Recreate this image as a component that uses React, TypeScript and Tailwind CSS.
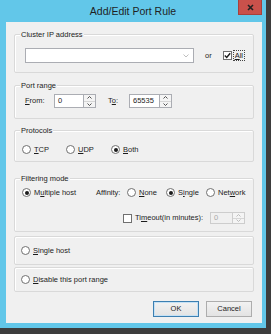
import React from "react";

function Acc({ pre = "", u, post = "" }: { pre?: string; u: string; post?: string }) {
  return (
    <span className="whitespace-nowrap">
      {pre}
      <span className="underline underline-offset-[1px] decoration-[0.5px]">{u}</span>
      {post}
    </span>
  );
}

function Radio({ checked = false }: { checked?: boolean }) {
  return (
    <span className="w-[9px] h-[9px] shrink-0 rounded-full border border-[#707070] bg-white flex items-center justify-center">
      {checked && <span className="w-[4px] h-[4px] rounded-full bg-[#1c1c1c]" />}
    </span>
  );
}

function Check({ checked = false }: { checked?: boolean }) {
  return (
    <span className="w-[9px] h-[9px] shrink-0 border border-[#707070] bg-white flex items-center justify-center">
      {checked && (
        <svg width="7" height="7" viewBox="0 0 7 7">
          <path d="M0.8 3.6 L2.7 5.5 L6.2 1.2" fill="none" stroke="#1c1c1c" strokeWidth="1.4" />
        </svg>
      )}
    </span>
  );
}

function Spin({ value, width, height, disabled = false }: { value: string; width: string; height: string; disabled?: boolean }) {
  const arrow = disabled ? "#b5b5b5" : "#404040";
  return (
    <div className={`flex ${height}`}>
      <div
        className={`${width} h-full border flex items-center pl-[3px] ${
          disabled ? "border-[#cdcdcd] bg-[#f0f0f0] text-[#a8a8a8]" : "border-[#abadb3] bg-white text-[#1c1c1c]"
        }`}
      >
        {value}
      </div>
      <div className={`w-[12px] h-full border border-l-0 flex flex-col ${disabled ? "border-[#cdcdcd]" : "border-[#abadb3]"}`}>
        <div className="flex-1 flex items-center justify-center border-b border-[#d6d6d6] bg-[#f4f4f4]">
          <svg width="5" height="3" viewBox="0 0 5 3">
            <path d="M0.5 2.5 L2.5 0.5 L4.5 2.5" fill="none" stroke={arrow} strokeWidth="0.9" />
          </svg>
        </div>
        <div className="flex-1 flex items-center justify-center bg-[#f4f4f4]">
          <svg width="5" height="3" viewBox="0 0 5 3">
            <path d="M0.5 0.5 L2.5 2.5 L4.5 0.5" fill="none" stroke={arrow} strokeWidth="0.9" />
          </svg>
        </div>
      </div>
    </div>
  );
}

// group box: border line at the top, caption sits over it
function Group({ label, className = "", children }: { label?: string; className?: string; children: React.ReactNode }) {
  return (
    <div className={`border border-[#d9d9d9] rounded-[2px] shadow-[inset_1px_1px_0_#ffffff] flex flex-col ${className}`}>
      {label && <div className="-mt-[5px] ml-[5px] px-[1px] self-start bg-[#f0f0f0] leading-[10px]">{label}</div>}
      {children}
    </div>
  );
}

export default function App() {
  return (
    <div className="w-[271px] h-[334px] bg-[#3d3d3d] font-['Liberation_Sans',Arial,sans-serif] text-[7.5px] text-[#1c1c1c]">
      <div className="w-[266px] h-[328px] bg-[#62c7e9] flex flex-col">
        {/* title bar */}
        <div className="h-[22px] relative flex items-center justify-center">
          <span className="text-[10.5px] text-[#1f1f1f] mt-[2px]">Add/Edit Port Rule</span>
          <div className="absolute right-[4px] top-0 w-[24px] h-[15px] bg-[#c9514b] border border-t-0 border-[#a8413c] flex items-center justify-center">
            <svg width="7" height="7" viewBox="0 0 7 7">
              <path d="M1 1 L6 6 M6 1 L1 6" stroke="#222" strokeWidth="1.6" />
            </svg>
          </div>
        </div>

        {/* client area */}
        <div className="flex-1 ml-[6px] mr-[4px] mb-[5px] bg-[#f0f0f0] px-[8px] flex flex-col">
          <Group label="Cluster IP address" className="mt-[12px]">
            <div className="flex items-center mt-[8px] mb-[9px] pl-[10px]">
              <div className="w-[169px] h-[15px] border border-[#abadb3] bg-white flex items-center justify-end pr-[4px]">
                <svg width="6" height="4" viewBox="0 0 6 4">
                  <path d="M0.5 0.5 L3 3 L5.5 0.5" fill="none" stroke="#b8b8b8" strokeWidth="0.9" />
                </svg>
              </div>
              <span className="ml-[11px]">or</span>
              <div className="ml-[11px] flex items-center">
                <Check checked />
                <span className="ml-[2px] px-[1px] outline outline-1 outline-dotted outline-[#444] leading-[9px]">
                  <Acc u="A" post="ll" />
                </span>
              </div>
            </div>
          </Group>

          <Group label="Port range" className="mt-[12px]">
            <div className="flex items-center mt-[3px] mb-[10px] pl-[10px]">
              <span className="w-[29px]">
                <Acc u="F" post="rom:" />
              </span>
              <Spin value="0" width="w-[30px]" height="h-[14px]" />
              <span className="ml-[12px] w-[21px]">
                <Acc pre="T" u="o" post=":" />
              </span>
              <Spin value="65535" width="w-[31px]" height="h-[14px]" />
            </div>
          </Group>

          <Group label="Protocols" className="mt-[11px]">
            <div className="flex items-center h-[11px] mt-[8px] mb-[6px] pl-[7px]">
              <div className="w-[44px] flex items-center gap-[3px]">
                <Radio />
                <Acc u="T" post="CP" />
              </div>
              <div className="w-[45px] flex items-center gap-[3px]">
                <Radio />
                <Acc u="U" post="DP" />
              </div>
              <div className="flex items-center gap-[3px]">
                <Radio checked />
                <Acc u="B" post="oth" />
              </div>
            </div>
          </Group>

          <Group label="Filtering mode" className="mt-[16px]">
            <div className="flex items-center h-[11px] mt-[3px] pl-[7px]">
              <div className="w-[74px] flex items-center gap-[3px]">
                <Radio checked />
                <Acc pre="M" u="u" post="ltiple host" />
              </div>
              <span className="w-[31px]">Affinity:</span>
              <div className="w-[39px] flex items-center gap-[3px]">
                <Radio />
                <Acc u="N" post="one" />
              </div>
              <div className="w-[40px] flex items-center gap-[3px]">
                <Radio checked />
                <Acc pre="S" u="i" post="ngle" />
              </div>
              <div className="flex items-center gap-[3px]">
                <Radio />
                <Acc pre="Net" u="w" post="ork" />
              </div>
            </div>
            <div className="flex items-center mt-[14px] mb-[7px] pl-[108px]">
              <div className="w-[87px] flex items-center gap-[3px]">
                <Check />
                <Acc pre="Ti" u="m" post="eout(in minutes):" />
              </div>
              <Spin value="0" width="w-[23px]" height="h-[12px]" disabled />
            </div>
          </Group>

          <Group className="mt-[4px] h-[29px] justify-center">
            <div className="flex items-center gap-[3px] pl-[6px]">
              <Radio />
              <Acc u="S" post="ingle host" />
            </div>
          </Group>

          <Group className="mt-[2px] h-[25px] justify-center">
            <div className="flex items-center gap-[3px] pl-[6px]">
              <Radio />
              <Acc u="D" post="isable this port range" />
            </div>
          </Group>

          <div className="flex justify-end gap-[7px] mt-[9px] pr-[2px]">
            <button className="w-[46px] h-[16px] border border-[#3c7fb1] bg-gradient-to-b from-[#f2f2f2] to-[#e3e3e3] shadow-[inset_0_0_0_1px_#c5e1f5] text-[7.5px] text-[#1c1c1c]">
              OK
            </button>
            <button className="w-[46px] h-[16px] border border-[#adadad] bg-gradient-to-b from-[#f2f2f2] to-[#e3e3e3] text-[7.5px] text-[#1c1c1c]">
              Cancel
            </button>
          </div>
        </div>
      </div>
    </div>
  );
}
